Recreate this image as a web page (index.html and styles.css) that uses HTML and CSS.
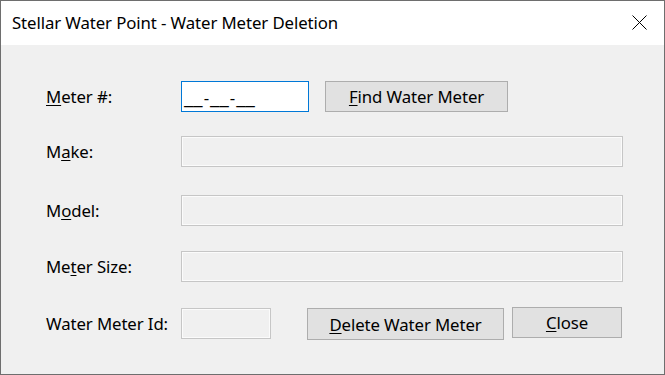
FILE: index.html
```html
<!DOCTYPE html>
<html>
<head>
<meta charset="utf-8">
<link rel="stylesheet" href="styles.css">
<title>Water Meter Deletion</title>
</head>
<body>
<div class="window">
  <div class="titlebar">
    <span class="title">Stellar Water Point - Water Meter Deletion</span>
    <svg class="close-x" width="15" height="15" viewBox="0 0 15 15"><path d="M0.5 0.5 L14.5 14.5 M14.5 0.5 L0.5 14.5" stroke="#000" stroke-width="1" fill="none"/></svg>
  </div>
  <div class="content">
    <div class="row r1">
      <label class="lbl"><u>M</u>eter #:</label>
      <div class="mask-input"><span class="seg">__</span><span class="dash">-</span><span class="seg">__</span><span class="dash">-</span><span class="seg">__</span></div>
      <button class="btn btn-find"><u>F</u>ind Water Meter</button>
    </div>
    <div class="row r2">
      <label class="lbl">M<u>a</u>ke:</label>
      <div class="ro wide"></div>
    </div>
    <div class="row r3">
      <label class="lbl">M<u>o</u>del:</label>
      <div class="ro wide"></div>
    </div>
    <div class="row r4">
      <label class="lbl">Me<u>t</u>er Size:</label>
      <div class="ro wide"></div>
    </div>
    <div class="row r5">
      <label class="lbl">Water Meter Id:</label>
      <div class="ro small"></div>
      <button class="btn btn-delete"><u>D</u>elete Water Meter</button>
      <button class="btn btn-close"><u>C</u>lose</button>
    </div>
  </div>
</div>
</body>
</html>
```

FILE: styles.css
```css
html, body {
  margin: 0;
  padding: 0;
}
body {
  width: 665px;
  height: 375px;
  overflow: hidden;
  font-family: "Noto Sans", "Liberation Sans", sans-serif;
  color: #000;
}
.window {
  box-sizing: border-box;
  width: 665px;
  height: 375px;
  border: 1px solid #6e6e6e;
  background: #f0f0f0;
  display: flex;
  flex-direction: column;
}
.titlebar {
  height: 44px;
  background: #fff;
  display: flex;
  align-items: center;
  justify-content: space-between;
  padding: 0 17px 0 11px;
  flex: none;
}
.title {
  font-size: 16.8px;
  letter-spacing: -0.1px;
  position: relative;
  top: -1px;
}
.close-x {
  display: block;
  position: relative;
  top: -1px;
}
.content {
  padding-left: 45px;
  display: flex;
  flex-direction: column;
}
.row {
  display: flex;
  align-items: center;
  height: 31px;
}
.r1 { margin-top: 36px; }
.r2 { margin-top: 24px; }
.r3 { margin-top: 28px; }
.r4 { margin-top: 25px; }
.r5 { margin-top: 25px; height: 33px; }
.lbl {
  width: 135px;
  flex: none;
  font-size: 16.8px;
  letter-spacing: -0.1px;
}
u {
  text-decoration: underline;
  text-underline-offset: 2px;
}
.mask-input {
  box-sizing: border-box;
  width: 128px;
  height: 31px;
  background: #fff;
  border: 1px solid #0078d7;
  font-size: 16.8px;
  padding: 3px 0 0 2px;
  line-height: 26px;
  white-space: nowrap;
}
.seg {
  font-size: 21px;
  line-height: 0;
}
.dash {
  margin: 0 1px;
}
.ro {
  box-sizing: border-box;
  height: 31px;
  border: 1px solid #c6c6c6;
  box-shadow: inset 0 0 0 1px #fbfbfb;
  background: #f0f0f0;
}
.wide { width: 442px; }
.small { width: 90px; height: 31px; }
.btn {
  box-sizing: border-box;
  background: #e1e1e1;
  border: 1px solid #adadad;
  font-family: inherit;
  font-size: 16.8px;
  letter-spacing: -0.1px;
  color: #000;
  padding: 0;
  margin: 0;
}
.btn-find {
  width: 183px;
  height: 31px;
  margin-left: 16px;
}
.btn-delete {
  width: 197px;
  height: 32px;
  margin-left: 36px;
  align-self: flex-end;
}
.btn-close {
  width: 110px;
  height: 31px;
  margin-left: 8px;
  align-self: flex-start;
}
```
